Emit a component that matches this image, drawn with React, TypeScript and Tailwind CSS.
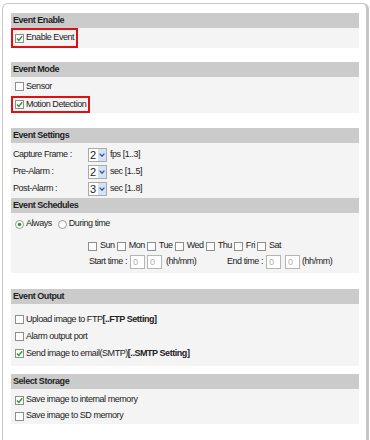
import type { ReactNode } from 'react'

const font = { fontFamily: '"Liberation Sans", Arial, sans-serif' }

function Check({ checked = false }: { checked?: boolean }) {
  return (
    <svg width="9" height="9" viewBox="0 0 9 9" className="shrink-0">
      <rect x="0.5" y="0.5" width="8" height="8" fill="#fdfdfd" stroke="#8e8e8e" />
      {checked && <path d="M2 4.6 L3.8 6.5 L7.2 2.3" fill="none" stroke="#2f9a2f" strokeWidth="1.4" />}
    </svg>
  )
}

function Radio({ checked = false }: { checked?: boolean }) {
  return (
    <svg width="9" height="9" viewBox="0 0 9 9" className="shrink-0">
      <circle cx="4.5" cy="4.5" r="4" fill="#fdfdfd" stroke="#8e8e8e" strokeWidth="0.9" />
      {checked && <circle cx="4.5" cy="4.5" r="1.8" fill="#2f9a2f" />}
    </svg>
  )
}

function Select({ value }: { value: string }) {
  return (
    <div className="flex h-[14px] w-[19px] items-stretch border border-[#a9a9a9] bg-white">
      <span className="flex-1 pl-[1px] text-[11px] leading-[12px] tracking-normal text-[#222]">{value}</span>
      <span className="flex w-[8px] items-center justify-center bg-[#d5e2f4]">
        <svg width="6" height="4" viewBox="0 0 6 4">
          <path d="M0.6 0.6 L3 3.2 L5.4 0.6" fill="none" stroke="#2a5a9a" strokeWidth="1.3" />
        </svg>
      </span>
    </div>
  )
}

function TimeBox() {
  return (
    <div className="h-[14px] w-[15px] shrink-0 border border-[#b5b5b5] bg-white pl-[2px] text-[9px] leading-[12px] text-[#b0b0b0]">0</div>
  )
}

function Header({ title }: { title: string }) {
  return (
    <div className="flex h-[15px] items-center bg-[#cbcbcb] pl-[2px] font-bold text-[#1e1e1e]">{title}</div>
  )
}

function CheckRow({ checked, children, h = 'h-[17px]' }: { checked?: boolean; children: ReactNode; h?: string }) {
  return (
    <div className={`flex items-center gap-[2px] pl-[4px] ${h}`}>
      <Check checked={checked} />
      <span>{children}</span>
    </div>
  )
}

function Boxed({ children, h }: { children: ReactNode; h: string }) {
  return (
    <div className={`flex ${h}`}>
      <div className="flex items-center gap-[2px] border-2 border-[#e01010] pl-[2px] pr-[2px]">{children}</div>
    </div>
  )
}

function SettingRow({ label, value, unit }: { label: string; value: string; unit: string }) {
  return (
    <div className="flex h-[17px] items-center">
      <span className="w-[77px] pl-[2px]">{label}</span>
      <Select value={value} />
      <span className="ml-[3px]">{unit}</span>
    </div>
  )
}

const days = ['Sun', 'Mon', 'Tue', 'Wed', 'Thu', 'Fri', 'Sat']

export default function App() {
  return (
    <div className="h-[440px] w-[370px] overflow-hidden whitespace-nowrap bg-white pl-[2px] pr-[1px] pt-[3px] text-[9px] tracking-[-0.45px] text-[#222]" style={font}>
      <div className="h-[460px] rounded-t-[6px] border-l border-r-[3px] border-t border-[#c6c6c6] pl-[8px] pr-[7px] pt-[9px]">
        {/* Event Enable */}
        <Header title="Event Enable" />
        <div className="h-[20px] bg-[#f4f4f4]">
          <Boxed h="h-[20px]">
            <Check checked />
            <span>Enable Event</span>
          </Boxed>
        </div>

        {/* Event Mode */}
        <div className="mt-[14px]">
          <Header title="Event Mode" />
          <div className="bg-[#f4f4f4]">
            <CheckRow h="h-[19px]">Sensor</CheckRow>
            <Boxed h="h-[17px]">
              <Check checked />
              <span>Motion Detection</span>
            </Boxed>
          </div>
        </div>

        {/* Event Settings */}
        <div className="mt-[15px]">
          <Header title="Event Settings" />
          <div className="bg-[#f4f4f4] pb-[1px] pt-[3px]">
            <SettingRow label="Capture Frame :" value="2" unit="fps [1..3]" />
            <SettingRow label="Pre-Alarm :" value="2" unit="sec [1..5]" />
            <SettingRow label="Post-Alarm :" value="3" unit="sec [1..8]" />
          </div>
          <Header title="Event Schedules" />
          <div className="bg-[#f4f4f4] pb-[3px] pt-[3px]">
            <div className="flex h-[16px] items-center gap-[2px] pl-[4px]">
              <Radio checked />
              <span>Always</span>
              <span className="ml-[2px]" />
              <Radio />
              <span>During time</span>
            </div>
            <div className="mt-[6px] flex h-[16px] items-center pl-[77px]">
              {days.map((d) => (
                <div key={d} className="mr-[2px] flex items-center gap-[3px]">
                  <Check />
                  <span>{d}</span>
                </div>
              ))}
            </div>
            <div className="flex h-[16px] items-center pl-[76px]">
              <span className="w-[43px] pr-[3px] text-right">Start time :</span>
              <div className="flex gap-[2px]">
                <TimeBox />
                <TimeBox />
              </div>
              <span className="ml-[4px] w-[60px]">(hh/mm)</span>
              <span className="w-[40px] pr-[3px] text-right">End time :</span>
              <div className="flex gap-[4px]">
                <TimeBox />
                <TimeBox />
              </div>
              <span className="ml-[2px]">(hh/mm)</span>
            </div>
          </div>
        </div>

        {/* Event Output */}
        <div className="mt-[16px]">
          <Header title="Event Output" />
          <div className="bg-[#f4f4f4] pb-[4px] pt-[7px]">
            <CheckRow>
              Upload image to FTP<b>[..FTP Setting]</b>
            </CheckRow>
            <CheckRow>Alarm output port</CheckRow>
            <CheckRow checked>
              Send image to email(SMTP)<b>[..SMTP Setting]</b>
            </CheckRow>
          </div>
        </div>

        {/* Select Storage */}
        <div className="mt-[8px]">
          <Header title="Select Storage" />
          <div className="bg-[#f4f4f4] pt-[3px]">
            <CheckRow h="h-[16px]" checked>
              Save image to internal memory
            </CheckRow>
            <CheckRow h="h-[16px]">Save image to SD memory</CheckRow>
          </div>
        </div>
      </div>
    </div>
  )
}
